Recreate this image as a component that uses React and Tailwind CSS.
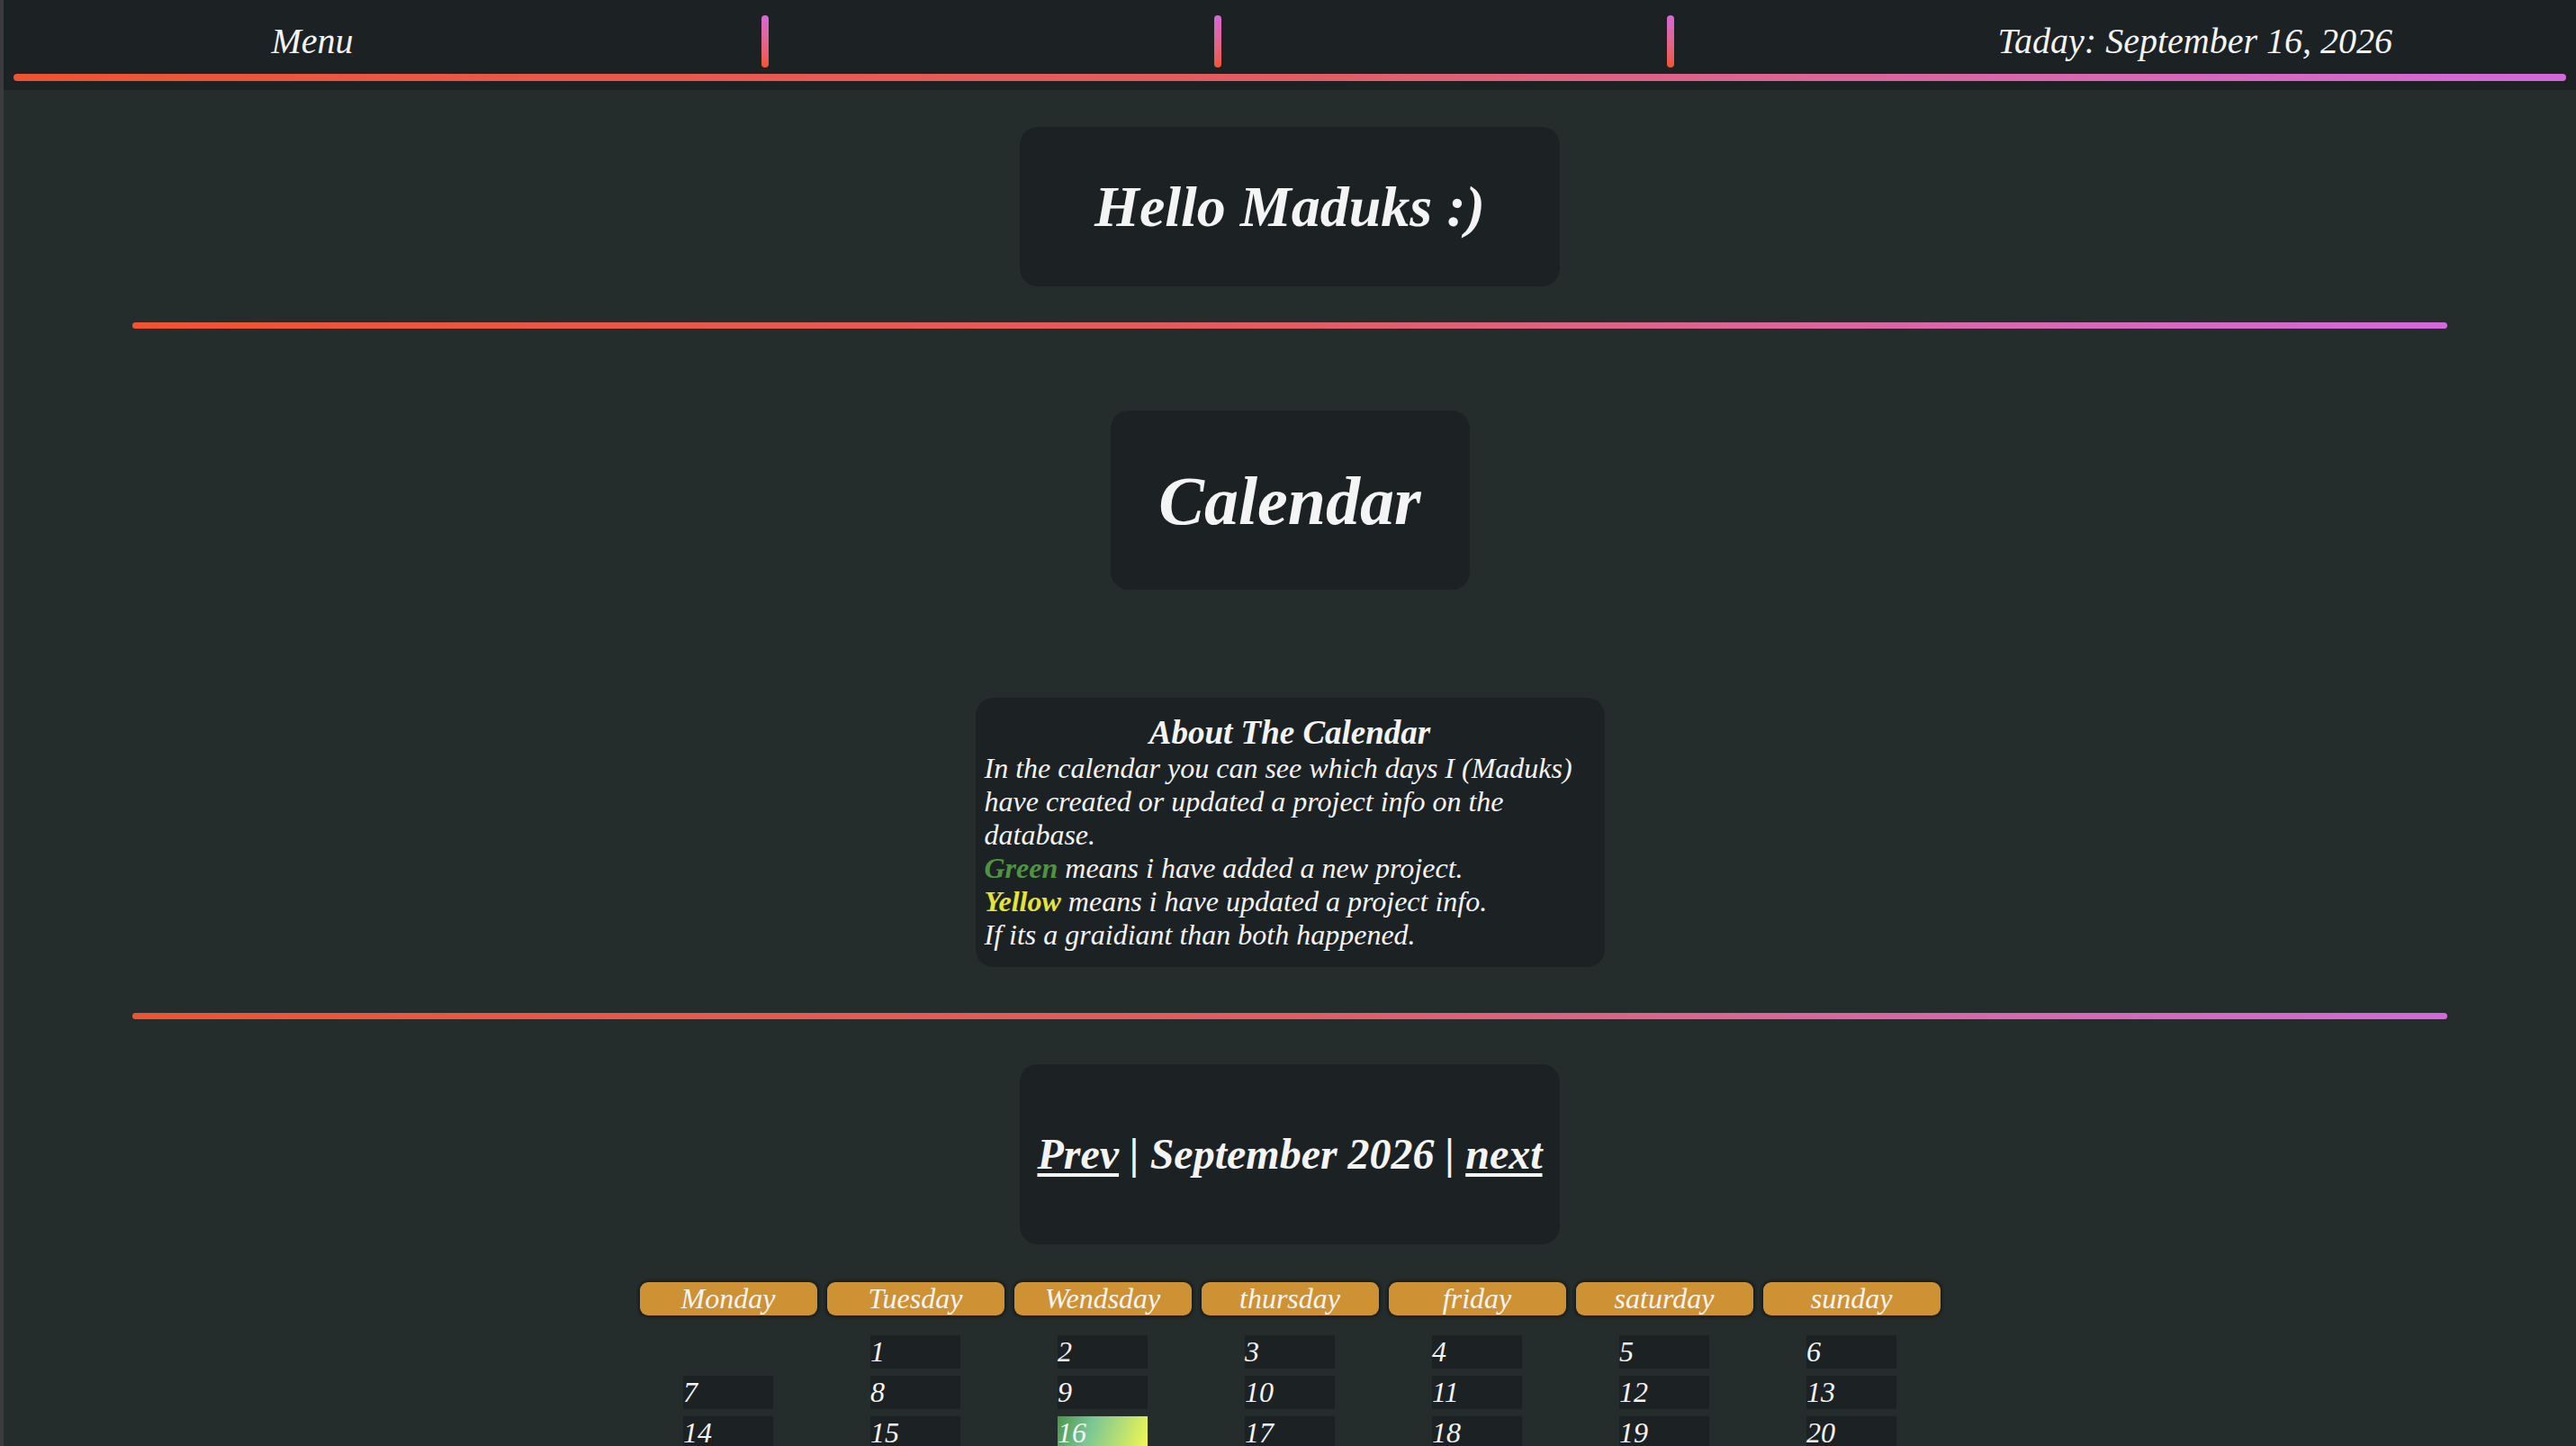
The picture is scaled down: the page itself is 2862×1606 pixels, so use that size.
import React from "react";

const days = ["Monday", "Tuesday", "Wendsday", "thursday", "friday", "saturday", "sunday"];

// september 2026 starts on a tuesday
const cells = [null, ...Array.from({ length: 30 }, (_, i) => i + 1)];

const Separator = () => (
  <div className="w-[8px] h-[58px] shrink-0 rounded-full bg-linear-to-b from-[#d866d8] to-[#f0552e]" />
);

const GradientLine = ({ className }) => (
  <div
    className={`h-[7px] rounded-full bg-linear-to-r from-[#ef5330] via-[#e35c62] to-[#d468dc] ${className}`}
  />
);

const DayCell = ({ day }) => {
  if (!day) return <div className="h-[37px]" />;
  const today = day === 16;
  return (
    <div className="flex justify-center">
      <div
        className={`w-[100px] h-[37px] leading-[37px] text-[32px] ${
          today
            ? "bg-[linear-gradient(110deg,#4c964a,#78c596_35%,#f4f852)]"
            : "bg-[#1c2224]"
        }`}
      >
        {day}
      </div>
    </div>
  );
};

export default function App() {
  return (
    <div className="min-h-screen flex bg-[#252c2c] font-['Liberation_Serif','Times_New_Roman',serif] italic text-[#f4f4f4]">
      <div className="w-[4px] shrink-0 bg-[#3c3b3d]" />
      <div className="flex-1 flex flex-col items-center pb-[60px]">
        {/* top bar */}
        <header className="w-full bg-[#1c2224] pb-[10px]">
          <div className="flex items-center h-[82px] pt-[10px] text-[40px]">
            <div className="w-[686px] shrink-0 text-center">Menu</div>
            <div className="w-[156px] shrink-0" />
            <Separator />
            <div className="w-[495px] shrink-0" />
            <Separator />
            <div className="w-[495px] shrink-0" />
            <Separator />
            <div className="flex-1 flex justify-end pr-[204px]">Taday: September 16, 2026</div>
          </div>
          <GradientLine className="mx-[11px] h-[8px]" />
        </header>

        <div className="mt-[41px] w-[600px] h-[177px] rounded-[20px] bg-[#1c2224] flex items-center justify-center">
          <h1 className="text-[64px] font-bold">Hello Maduks :)</h1>
        </div>

        <GradientLine className="mt-[40px] w-[90%]" />

        <div className="mt-[91px] w-[399px] h-[199px] rounded-[20px] bg-[#1c2224] flex items-center justify-center">
          <h1 className="text-[76px] font-bold">Calendar</h1>
        </div>

        <div className="mt-[120px] w-[699px] h-[299px] rounded-[20px] bg-[#1c2224] pt-[17px] px-[10px]">
          <h3 className="text-[37px] leading-[43px] font-bold text-center">About The Calendar</h3>
          <p className="text-[32px] leading-[37px]">
            In the calendar you can see which days I (Maduks) have created or updated a project
            info on the database.
            <br />
            <span className="font-bold text-[#4e9440]">Green</span> means i have added a new
            project.
            <br />
            <span className="font-bold text-[#e3e33c]">Yellow</span> means i have updated a
            project info.
            <br />
            If its a graidiant than both happened.
          </p>
        </div>

        <GradientLine className="mt-[51px] w-[90%]" />

        <div className="mt-[50px] w-[600px] h-[200px] rounded-[20px] bg-[#1c2224] flex items-center justify-center">
          <h2 className="text-[48px] font-bold">
            <a href="#" className="underline decoration-[4px] underline-offset-[5px]">
              Prev
            </a>{" "}
            | September 2026 |{" "}
            <a href="#" className="underline decoration-[4px] underline-offset-[5px]">
              next
            </a>
          </h2>
        </div>

        <div className="mt-[42px] grid grid-cols-[repeat(7,197px)] gap-x-[11px]">
          {days.map((d) => (
            <div
              key={d}
              className="h-[37px] leading-[37px] text-[32px] text-center rounded-[9px] bg-[#ce9234] shadow-[0_0_3px_2px_rgba(0,0,0,0.35)]"
            >
              {d}
            </div>
          ))}
        </div>

        <div className="mt-[22px] grid grid-cols-[repeat(7,197px)] gap-x-[11px] gap-y-[8px]">
          {cells.map((day, i) => (
            <DayCell key={i} day={day} />
          ))}
        </div>
      </div>
    </div>
  );
}
